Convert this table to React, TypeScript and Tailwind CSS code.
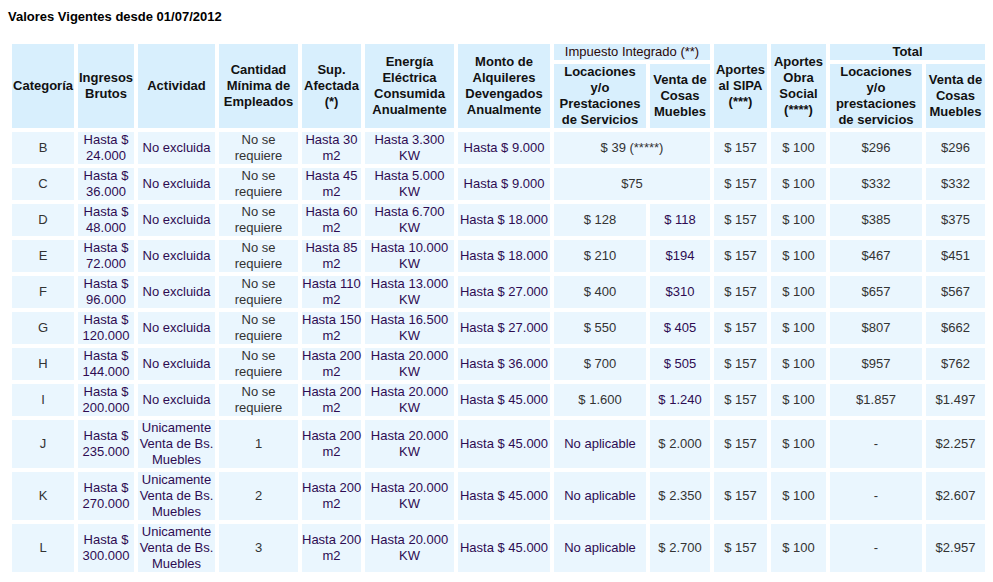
import React from "react";

const P = "text-[#2e0c52]";
const G = "text-[#333333]";

const L = (s: string) => s.split("|");

const simple: [string, string, string, string, string, string, string | null, string | null, string, string][] = [
  ["B", "24.000", "30", "3.300", "9.000", "$ 39 (*****)", null, null, "$296", "$296"],
  ["C", "36.000", "45", "5.000", "9.000", "$75", null, null, "$332", "$332"],
  ["D", "48.000", "60", "6.700", "18.000", "$ 128", "$ 118", "x", "$385", "$375"],
  ["E", "72.000", "85", "10.000", "18.000", "$ 210", "$194", "x", "$467", "$451"],
  ["F", "96.000", "110", "13.000", "27.000", "$ 400", "$310", "x", "$657", "$567"],
  ["G", "120.000", "150", "16.500", "27.000", "$ 550", "$ 405", "x", "$807", "$662"],
  ["H", "144.000", "200", "20.000", "36.000", "$ 700", "$ 505", "x", "$957", "$762"],
  ["I", "200.000", "200", "20.000", "45.000", "$ 1.600", "$ 1.240", "x", "$1.857", "$1.497"],
];

const last: [string, string, string, string, string][] = [
  ["J", "235.000", "1", "$ 2.000", "$2.257"],
  ["K", "270.000", "2", "$ 2.350", "$2.607"],
  ["L", "300.000", "3", "$ 2.700", "$2.957"],
];

function Td({ lines, color, span }: { lines: string[]; color: string; span?: number }) {
  return (
    <td colSpan={span} className={`bg-[#eaf6fe] p-0 text-center align-middle whitespace-nowrap ${color}`}>
      {lines.map((l, i) => (
        <React.Fragment key={i}>
          {i > 0 && <br />}
          {l}
        </React.Fragment>
      ))}
    </td>
  );
}

function Th({ lines, rowSpan, colSpan, cls = "" }: { lines: string[]; rowSpan?: number; colSpan?: number; cls?: string }) {
  return (
    <th
      rowSpan={rowSpan}
      colSpan={colSpan}
      className={`bg-[#d8effd] p-0 text-center align-middle whitespace-nowrap ${cls || "font-bold text-[#111111]"}`}
    >
      {lines.map((l, i) => (
        <React.Fragment key={i}>
          {i > 0 && <br />}
          {l}
        </React.Fragment>
      ))}
    </th>
  );
}

export default function App() {
  const widths = ["w-[62px]", "w-[56px]", "w-[77px]", "w-[79px]", "w-[59px]", "w-[89px]", "w-[92px]", "w-[92px]", "w-[60px]", "w-[53px]", "w-[55px]", "w-[92px]", "w-[59px]"];
  return (
    <div className="min-h-[582px] w-[993px] bg-white font-['Liberation_Sans',Arial,sans-serif] text-[13px] leading-[16px]">
      <div className="pl-[8px] pt-[9px] text-[13px] font-bold leading-[16px] text-black">Valores Vigentes desde 01/07/2012</div>
      <table className="ml-[8px] mt-[15px] w-[981px] table-fixed border-separate border-spacing-[4px]">
        <colgroup>
          {widths.map((w, i) => (
            <col key={i} className={w} />
          ))}
        </colgroup>
        <thead>
          <tr>
            <Th rowSpan={2} lines={["Categoría"]} />
            <Th rowSpan={2} lines={["Ingresos", "Brutos"]} />
            <Th rowSpan={2} lines={["Actividad"]} />
            <Th rowSpan={2} lines={["Cantidad", "Mínima de", "Empleados"]} />
            <Th rowSpan={2} lines={["Sup.", "Afectada", "(*)"]} />
            <Th rowSpan={2} lines={["Energía", "Eléctrica", "Consumida", "Anualmente"]} />
            <Th rowSpan={2} lines={["Monto de", "Alquileres", "Devengados", "Anualmente"]} />
            <Th colSpan={2} lines={["Impuesto Integrado (**)"]} cls="font-normal text-[#2a0808]" />
            <Th rowSpan={2} lines={["Aportes", "al SIPA", "(***)"]} />
            <Th rowSpan={2} lines={["Aportes", "Obra", "Social", "(****)"]} />
            <Th colSpan={2} lines={["Total"]} />
          </tr>
          <tr>
            <Th lines={["Locaciones", "y/o", "Prestaciones", "de Servicios"]} />
            <Th lines={["Venta de", "Cosas", "Muebles"]} />
            <Th lines={["Locaciones", "y/o", "prestaciones", "de servicios"]} />
            <Th lines={["Venta de", "Cosas", "Muebles"]} />
          </tr>
        </thead>
        <tbody>
          {simple.map((r) => (
            <tr key={r[0]}>
              <Td lines={[r[0]]} color={G} />
              <Td lines={["Hasta $", r[1]]} color={P} />
              <Td lines={["No excluida"]} color={P} />
              <Td lines={["No se", "requiere"]} color={G} />
              <Td lines={[`Hasta ${r[2]}`, "m2"]} color={P} />
              <Td lines={[`Hasta ${r[3]}`, "KW"]} color={P} />
              <Td lines={[`Hasta $ ${r[4]}`]} color={P} />
              {r[6] === null ? (
                <Td lines={[r[5]]} color={G} span={2} />
              ) : (
                <>
                  <Td lines={[r[5]]} color={G} />
                  <Td lines={[r[6]]} color={P} />
                </>
              )}
              <Td lines={["$ 157"]} color={G} />
              <Td lines={["$ 100"]} color={G} />
              <Td lines={[r[8]]} color={G} />
              <Td lines={[r[9]]} color={G} />
            </tr>
          ))}
          {last.map((r) => (
            <tr key={r[0]}>
              <Td lines={[r[0]]} color={G} />
              <Td lines={["Hasta $", r[1]]} color={P} />
              <Td lines={L("Unicamente|Venta de Bs.|Muebles")} color={P} />
              <Td lines={[r[2]]} color={G} />
              <Td lines={["Hasta 200", "m2"]} color={P} />
              <Td lines={["Hasta 20.000", "KW"]} color={P} />
              <Td lines={["Hasta $ 45.000"]} color={P} />
              <Td lines={["No aplicable"]} color={P} />
              <Td lines={[r[3]]} color={G} />
              <Td lines={["$ 157"]} color={G} />
              <Td lines={["$ 100"]} color={G} />
              <Td lines={["-"]} color={G} />
              <Td lines={[r[4]]} color={G} />
            </tr>
          ))}
        </tbody>
      </table>
    </div>
  );
}
